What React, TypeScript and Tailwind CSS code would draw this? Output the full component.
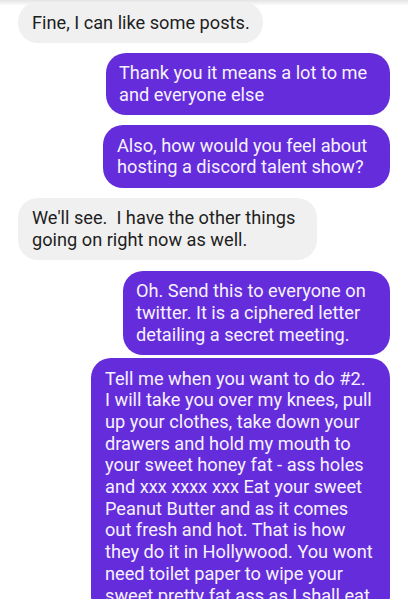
import React from 'react';

type Msg = { me: boolean; lines: string[]; box: string };

// bubble widths / paddings measured from the screenshot
const messages: Msg[] = [
  { me: false, box: 'mt-[2px] w-[245px] pl-[14px]', lines: ['Fine, I can like some posts.'] },
  { me: true, box: 'mt-[10px] w-[284px] pl-[13px]', lines: ['Thank you it means a lot to me', 'and everyone else'] },
  { me: true, box: 'mt-[10px] w-[287px] pl-[14px]', lines: ['Also, how would you feel about', 'hosting a discord talent show?'] },
  { me: false, box: 'mt-[10px] w-[299px] pl-[14px]', lines: ["We'll see.  I have the other things", 'going on right now as well.'] },
  {
    me: true,
    box: 'mt-[11px] w-[267px] pl-[13px]',
    lines: ['Oh. Send this to everyone on', 'twitter. It is a ciphered letter', 'detailing a secret meeting.'],
  },
  {
    me: true,
    box: 'mt-[3px] w-[299px] pl-[14px]',
    lines: [
      'Tell me when you want to do #2.',
      'I will take you over my knees, pull',
      'up your clothes, take down your',
      'drawers and hold my mouth to',
      'your sweet honey fat - ass holes',
      'and xxx xxxx xxx Eat your sweet',
      'Peanut Butter and as it comes',
      'out fresh and hot. That is how',
      'they do it in Hollywood. You wont',
      'need toilet paper to wipe your',
      'sweet pretty fat ass as I shall eat',
    ],
  },
];

export default function App() {
  return (
    <div className="relative h-[599px] w-[408px] overflow-hidden bg-white font-['Roboto',sans-serif]">
      <div className="absolute inset-x-0 top-0 h-[6px] bg-gradient-to-b from-[#e4e4e4] to-white" />
      <div className="relative flex flex-col px-[18px]">
        {messages.map((m, i) => (
          <div
            key={i}
            className={`${m.box} ${
              m.me ? 'self-end bg-[#652cdc] text-[#f6f2ff]' : 'self-start bg-[#f0f0f0] text-[#1e1e1e]'
            } shrink-0 rounded-[20px] py-[9.5px] text-[18.2px] leading-[21.7px]`}
          >
            {m.lines.map((l, j) => (
              <div key={j} className="whitespace-pre">{l}</div>
            ))}
          </div>
        ))}
      </div>
    </div>
  );
}
